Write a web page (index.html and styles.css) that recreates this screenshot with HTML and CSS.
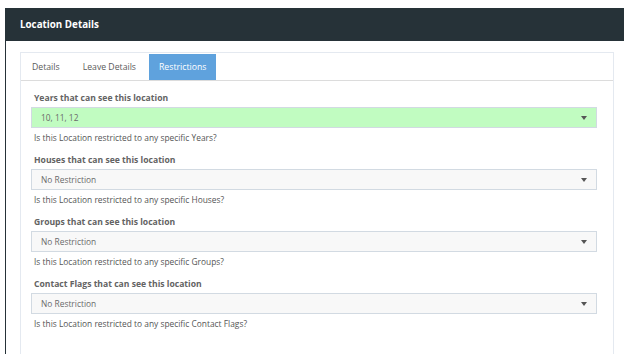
FILE: index.html
```html
<!DOCTYPE html>
<html>
<head>
<meta charset="utf-8">
<link rel="stylesheet" href="styles.css">
</head>
<body>
<div class="panel">
  <div class="panel-heading">Location Details</div>
  <div class="panel-body">
    <div class="card">
      <div class="tabs">
        <div class="tab">Details</div>
        <div class="tab">Leave Details</div>
        <div class="tab active">Restrictions</div>
      </div>
      <div class="tab-content">
        <div class="form-group">
          <div class="label">Years that can see this location</div>
          <div class="select green"><span>10, 11, 12</span><i class="caret"></i></div>
          <div class="help">Is this Location restricted to any specific Years?</div>
        </div>
        <div class="form-group">
          <div class="label">Houses that can see this location</div>
          <div class="select"><span>No Restriction</span><i class="caret"></i></div>
          <div class="help">Is this Location restricted to any specific Houses?</div>
        </div>
        <div class="form-group">
          <div class="label">Groups that can see this location</div>
          <div class="select"><span>No Restriction</span><i class="caret"></i></div>
          <div class="help">Is this Location restricted to any specific Groups?</div>
        </div>
        <div class="form-group">
          <div class="label">Contact Flags that can see this location</div>
          <div class="select"><span>No Restriction</span><i class="caret"></i></div>
          <div class="help">Is this Location restricted to any specific Contact Flags?</div>
        </div>
      </div>
    </div>
  </div>
</div>
</body>
</html>
```

FILE: styles.css
```css
html, body {
  margin: 0;
  padding: 0;
  background: #ffffff;
  font-family: "Open Sans", "Noto Sans", sans-serif;
  font-size: 8.4px;
  color: #555555;
}
.panel {
  margin: 8px 0 0 5px;
  border-left: 1px solid #263238;
  height: 346px;
}
.panel-heading {
  background: #263238;
  height: 33px;
  line-height: 33px;
  padding-left: 14px;
  color: #ffffff;
  font-weight: bold;
  font-size: 9.8px;
}
.panel-body {
  padding: 11px 10px 0 14px;
}
.card {
  border: 1px solid #e4e9f0;
  border-bottom: none;
  height: 310px;
}
.tabs {
  display: flex;
  gap: 3px;
  padding: 1px 0 0 1px;
  border-bottom: 1px solid #dcdcdc;
  height: 26px;
}
.tab {
  padding: 0 10px;
  line-height: 26px;
  color: #5a5a5a;
  font-size: 8.7px;
}
.tab.active {
  background: #5fa2dd;
  color: #ffffff;
}
.tab-content {
  padding: 11px 16px 0 13px;
}
.form-group {
  margin-bottom: 10px;
}
.label {
  font-weight: bold;
  font-size: 8.6px;
  line-height: 12px;
  margin-bottom: 3px;
  color: #636363;
}
.select {
  margin-left: -3px;
  height: 19px;
  border: 1px solid #d2dae2;
  background: #f8f8f8;
  display: flex;
  align-items: center;
  justify-content: space-between;
  padding: 0 9px 0 9px;
  color: #6a6a6a;
}
.select.green {
  background: #c1fcc1;
}
.caret {
  width: 0;
  height: 0;
  border-left: 3px solid transparent;
  border-right: 3px solid transparent;
  border-top: 4px solid #555555;
}
.help {
  margin-top: 4px;
  line-height: 12px;
  color: #555555;
}
```
